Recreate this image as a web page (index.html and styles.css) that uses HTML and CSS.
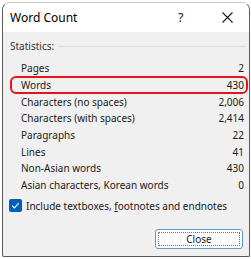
FILE: index.html
```html
<!DOCTYPE html>
<html lang="en">
<head>
  <meta charset="UTF-8" />
  <title>Word Count</title>
  <link rel="stylesheet" href="styles.css">
</head>
<body>
  <div class="dialog">
    <div class="titlebar">
      <span class="title">Word Count</span>
      <span class="help">?</span>
      <span class="close-x">
        <svg width="11" height="11" viewBox="0 0 11 11"><path d="M0.5 0.5 L10.5 10.5 M10.5 0.5 L0.5 10.5" stroke="#1a1a1a" stroke-width="1.1" fill="none"/></svg>
      </span>
    </div>
    <div class="content">
      <div class="group-head">
        <span>Statistics:</span>
        <span class="sep"></span>
      </div>
      <div class="stats">
        <div class="row"><span>Pages</span><span>2</span></div>
        <div class="row hl"><span>Words</span><span>430</span></div>
        <div class="row"><span>Characters (no spaces)</span><span>2,006</span></div>
        <div class="row"><span>Characters (with spaces)</span><span>2,414</span></div>
        <div class="row"><span>Paragraphs</span><span>22</span></div>
        <div class="row"><span>Lines</span><span>41</span></div>
        <div class="row"><span>Non-Asian words</span><span>430</span></div>
        <div class="row"><span>Asian characters, Korean words</span><span>0</span></div>
      </div>
      <label class="check">
        <span class="box">
          <svg width="9" height="9" viewBox="0 0 9 9"><path d="M1.2 4.6 L3.4 6.8 L7.8 2.2" stroke="#fff" stroke-width="1.2" fill="none"/></svg>
        </span>
        <span>Include textboxes, <u>f</u>ootnotes and endnotes</span>
      </label>
      <div class="actions">
        <button class="btn"><span class="focus">Close</span></button>
      </div>
    </div>
  </div>
</body>
</html>
```

FILE: styles.css
```css
body {
  margin: 0;
  background: #fff;
  font-family: "Noto Sans", "Open Sans", sans-serif;
  color: #1a1a1a;
}
.dialog {
  margin: 2px 1px 0 2px;
  width: 246px;
  height: 253px;
  border: 1px solid #5a5a5a;
  border-top-color: #c8c8c8;
  border-radius: 8px 8px 2px 2px;
  background: #f0f0f0;
  display: flex;
  flex-direction: column;
  overflow: hidden;
}
.titlebar {
  height: 29px;
  background: #fff;
  display: flex;
  align-items: center;
  padding: 0 0 0 7px;
  flex-shrink: 0;
}
.title {
  font-size: 12px;
  flex: 1;
  color: #000;
}
.help {
  font-size: 12.5px;
  width: 8px;
  margin-right: 36px;
  color: #1a1a1a;
}
.close-x {
  width: 11px;
  height: 11px;
  margin-right: 16px;
  display: flex;
}
.content {
  flex: 1;
  display: flex;
  flex-direction: column;
  position: relative;
}
.group-head {
  display: flex;
  align-items: center;
  height: 28px;
  padding: 0 3px 0 7px;
  font-size: 10px;
  color: #333;
}
.sep {
  flex: 1;
  height: 1px;
  background: #dcdcdc;
  margin-left: 4px;
}
.stats {
  padding: 0 5px 0 18px;
}
.row {
  height: 16.7px;
  display: flex;
  align-items: center;
  justify-content: space-between;
  font-size: 10px;
  position: relative;
}
.row.hl::before {
  content: "";
  position: absolute;
  left: -11px;
  right: -4px;
  top: -1px;
  bottom: -1px;
  border: 2px solid #e5141b;
  border-radius: 6px;
}
.check {
  display: flex;
  align-items: center;
  gap: 4px;
  margin: 5px 0 0 6px;
  font-size: 10px;
}
.box {
  width: 13px;
  height: 13px;
  background: #005fb8;
  border-radius: 2px;
  display: flex;
  align-items: center;
  justify-content: center;
}
.actions {
  display: flex;
  justify-content: flex-end;
  padding: 16px 6px 0 0;
}
.btn {
  width: 88px;
  height: 20px;
  padding: 2px;
  border: 1px solid #5b9bd5;
  border-radius: 3px;
  background: #fdfdfd;
  font-family: inherit;
  font-size: 10px;
  color: #1a1a1a;
  display: flex;
}
.focus {
  flex: 1;
  border: 1px dotted #777;
  display: flex;
  align-items: center;
  justify-content: center;
}
```
